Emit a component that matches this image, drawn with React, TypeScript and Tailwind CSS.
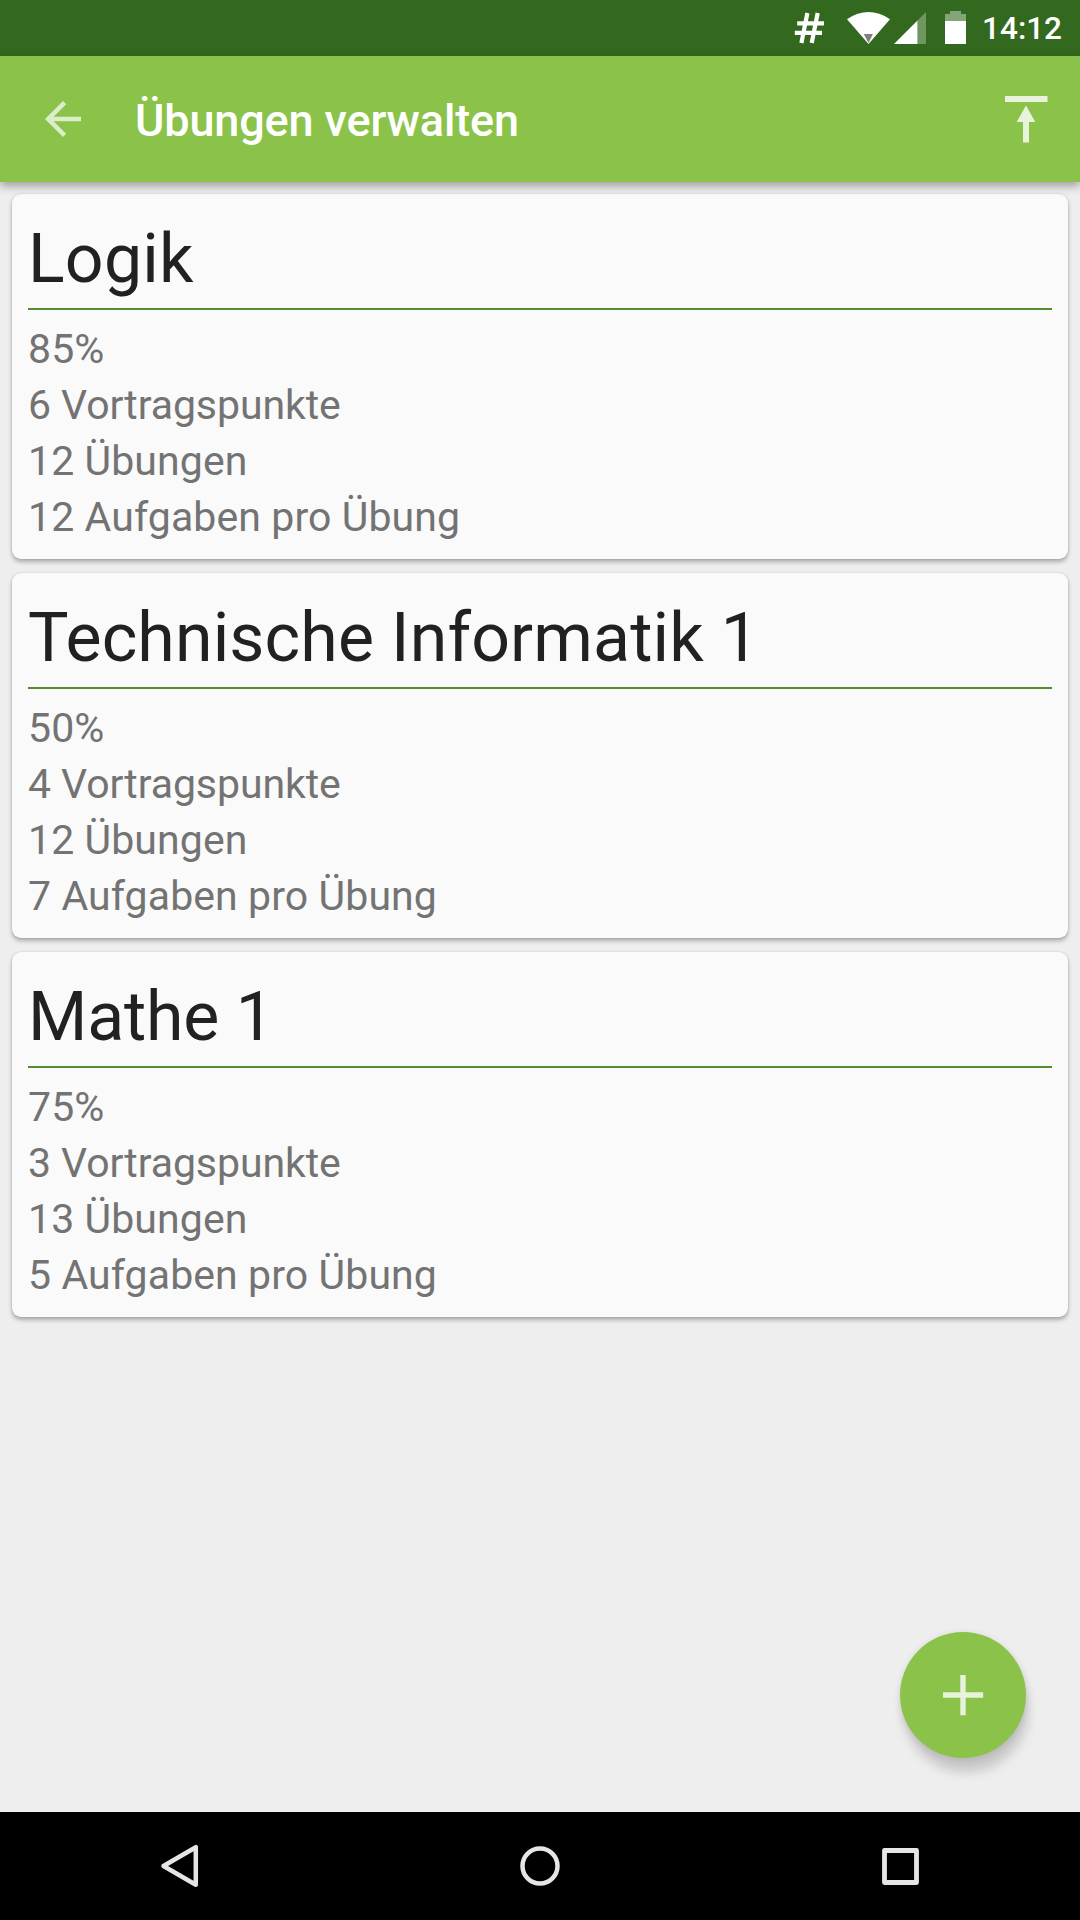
type Exercise = {
  title: string;
  titleClass: string;
  details: string[];
};

const exercises: Exercise[] = [
  { title: "Logik", titleClass: "tracking-[0.25px]", details: ["85%", "6 Vortragspunkte", "12 Übungen", "12 Aufgaben pro Übung"] },
  { title: "Technische Informatik 1", titleClass: "tracking-[0.14px]", details: ["50%", "4 Vortragspunkte", "12 Übungen", "7 Aufgaben pro Übung"] },
  { title: "Mathe 1", titleClass: "tracking-[-0.2px]", details: ["75%", "3 Vortragspunkte", "13 Übungen", "5 Aufgaben pro Übung"] },
];

const detailTracking = ["tracking-[0.1px]", "tracking-[-0.07px]", "tracking-[0.1px]", "tracking-[0.1px]"];

function StatusBar() {
  return (
    <div className="flex h-[56px] shrink-0 items-center justify-end bg-[#33691e] pr-[18px] text-white">
      <svg className="mr-[21px] h-[56px] w-[32px]" viewBox="794 0 32 56" fill="none" stroke="#fff" strokeWidth="4.2">
        <path d="M807.4 13L801.4 43M817.7 13L811.7 43M797.2 23.3H824M794.8 32.8H822" />
      </svg>
      <svg className="mr-[3px] h-[56px] w-[44px]" viewBox="847 0 44 56">
        <path d="M847 19.2Q868.5 5 890 19.2L868.5 44Z" fill="#fff" />
        <path d="M863.8 34H872.9L868.5 43Z" fill="#7f7f7f" />
      </svg>
      <svg className="mr-[19px] h-[56px] w-[32px]" viewBox="894 0 32 56" fill="#fff">
        <path d="M917.5 20.5L926 12V44H917.5Z" opacity="0.3" />
        <path d="M894 44L917.5 20.5V44Z" />
      </svg>
      <svg className="mr-[14px] h-[56px] w-[21px]" viewBox="945 0 21 56" fill="#fff">
        <path d="M945 21V14H950V11H961V14H966V21Z" opacity="0.4" />
        <path d="M945 21H966V44H945Z" />
      </svg>
      <span className="w-[82px] whitespace-nowrap pt-[2px] text-right text-[31.5px] leading-[56px] font-medium">14:12</span>
    </div>
  );
}

function AppBar() {
  return (
    <header className="relative z-10 flex h-[126px] shrink-0 items-center bg-[#8bc34a] shadow-[0_4px_9px_rgba(0,0,0,0.34)]">
      <button className="ml-[36px]" aria-label="Zurück">
        <svg className="size-[54px]" viewBox="0 0 24 24" fill="#fff" opacity="0.7">
          <path d="M20 11H7.83l5.59-5.59L12 4l-8 8 8 8 1.41-1.41L7.83 13H20v-2z" />
        </svg>
      </button>
      <h1 className="ml-[45px] flex-1 pt-[2px] text-[45px] leading-[63px] font-medium tracking-[-0.14px] text-white">Übungen verwalten</h1>
      <button className="mr-[27px]" aria-label="Exportieren">
        <svg className="size-[54px]" viewBox="999 92 54 54" fill="#fff" opacity="0.8">
          <path d="M1005 96H1047.5V102H1005ZM1026 105.5L1035.3 122H1029V142.5H1023V122H1016.7Z" />
        </svg>
      </button>
    </header>
  );
}

function ExerciseCard({ title, titleClass, details }: Exercise) {
  return (
    <article className="h-[365px] rounded-[9px] bg-[#fafafa] px-[16px] pt-[25px] shadow-[0_3px_4px_rgba(0,0,0,0.28),0_0_2px_rgba(0,0,0,0.16)]">
      <h2 className={`text-[68px] leading-[80px] text-[#212121] ${titleClass}`}>{title}</h2>
      <div className="mt-[9px] mb-[11px] h-[2px] bg-[#558b2f]" />
      {details.map((line, i) => (
        <p key={line} className={`text-[41px] leading-[56px] text-[#737373] ${detailTracking[i]}`}>{line}</p>
      ))}
    </article>
  );
}

function NavigationBar() {
  return (
    <nav className="flex h-[108px] shrink-0 items-center justify-center gap-[306px] bg-black">
      <svg className="size-[54px]" viewBox="153 1839 54 54" fill="none" stroke="#e6e6e6" strokeWidth="4.5" strokeLinejoin="round">
        <path d="M163.5 1866L195.8 1847.2V1884.8Z" />
      </svg>
      <svg className="size-[54px]" viewBox="513 1839 54 54" fill="none" stroke="#e6e6e6" strokeWidth="4.5">
        <circle cx="540" cy="1866" r="17.5" />
      </svg>
      <svg className="size-[54px]" viewBox="873 1839 54 54" fill="none" stroke="#e6e6e6" strokeWidth="4.8" strokeLinejoin="round">
        <path d="M884.5 1850.5H916.5V1882.5H884.5Z" />
      </svg>
    </nav>
  );
}

export default function App() {
  return (
    <div className="relative flex h-[1920px] w-[1080px] flex-col overflow-hidden bg-[#eeeeee] font-[Roboto,sans-serif]">
      <StatusBar />
      <AppBar />
      <main className="flex flex-1 flex-col gap-[14px] px-[12px] pt-[12px]">
        {exercises.map((exercise) => (
          <ExerciseCard key={exercise.title} {...exercise} />
        ))}
      </main>
      <button
        aria-label="Hinzufügen"
        className="absolute right-[54px] bottom-[162px] flex size-[126px] items-center justify-center rounded-full bg-[#8bc34a] shadow-[3px_15px_12px_-1px_rgba(0,0,0,0.17),0_1px_7px_rgba(0,0,0,0.1)]"
      >
        <svg className="size-[54px]" viewBox="0 0 54 54" fill="#fff" opacity="0.8">
          <path d="M24.3 7H29.7V24.3H47.2V29.7H29.7V47.2H24.3V29.7H7V24.3H24.3Z" />
        </svg>
      </button>
      <NavigationBar />
    </div>
  );
}
